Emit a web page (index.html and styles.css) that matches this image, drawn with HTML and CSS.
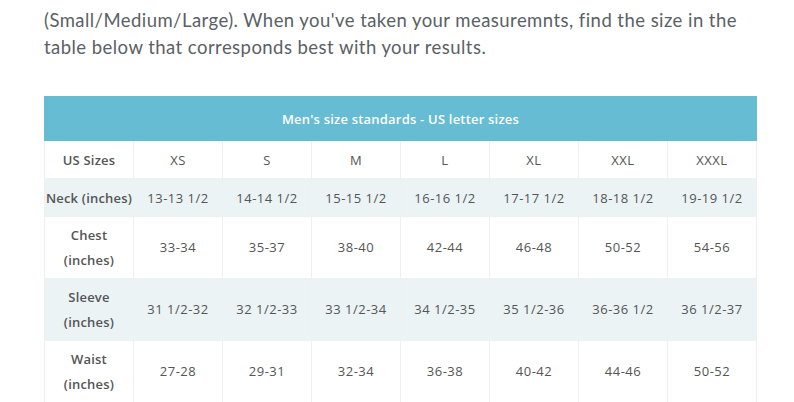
FILE: index.html
```html
<!DOCTYPE html>
<html>
<head>
<meta charset="utf-8">
<link rel="stylesheet" href="styles.css">
</head>
<body>
<div class="page">
  <p class="intro">(Small/Medium/Large). When you've taken your measuremnts, find the size in the table below that corresponds best with your results.</p>
  <table class="sizes">
    <thead>
      <tr><th colspan="8" class="title">Men's size standards - US letter sizes</th></tr>
    </thead>
    <tbody>
      <tr><th>US Sizes</th><td>XS</td><td>S</td><td>M</td><td>L</td><td>XL</td><td>XXL</td><td>XXXL</td></tr>
      <tr class="alt"><th>Neck (inches)</th><td>13-13 1/2</td><td>14-14 1/2</td><td>15-15 1/2</td><td>16-16 1/2</td><td>17-17 1/2</td><td>18-18 1/2</td><td>19-19 1/2</td></tr>
      <tr class="tall"><th>Chest<br>(inches)</th><td>33-34</td><td>35-37</td><td>38-40</td><td>42-44</td><td>46-48</td><td>50-52</td><td>54-56</td></tr>
      <tr class="alt tall"><th>Sleeve<br>(inches)</th><td>31 1/2-32</td><td>32 1/2-33</td><td>33 1/2-34</td><td>34 1/2-35</td><td>35 1/2-36</td><td>36-36 1/2</td><td>36 1/2-37</td></tr>
      <tr class="tall"><th>Waist<br>(inches)</th><td>27-28</td><td>29-31</td><td>32-34</td><td>36-38</td><td>40-42</td><td>44-46</td><td>50-52</td></tr>
    </tbody>
  </table>
</div>
</body>
</html>
```
FILE: styles.css
```css
html, body { margin: 0; padding: 0; background: #fff; }
.page { padding: 7px 37px 0 44px; }
.intro {
  margin: 0 0 35px 0;
  font-family: "Lato", sans-serif;
  font-size: 18.5px;
  line-height: 27px;
  color: #5a6166;
  letter-spacing: 0.45px;
}
.sizes {
  width: 713px;
  border-collapse: collapse;
  table-layout: fixed;
  font-family: "Open Sans", sans-serif;
  font-size: 13px;
  letter-spacing: 0.5px;
  color: #555;
}
.sizes th, .sizes td {
  border: 1px solid #edf1f2;
  text-align: center;
  padding: 0;
  height: 37px;
}
.sizes th { font-weight: 600; color: #555; letter-spacing: 0.2px; white-space: nowrap; }
.sizes .title {
  background: #65bcd3;
  color: #fff;
  height: 43px;
  border-color: #65bcd3;
  font-weight: 600;
}
.sizes tr.alt { background: #ebf3f5; }
.sizes tr.tall th, .sizes tr.tall td { height: 61px; line-height: 25px; }
```
